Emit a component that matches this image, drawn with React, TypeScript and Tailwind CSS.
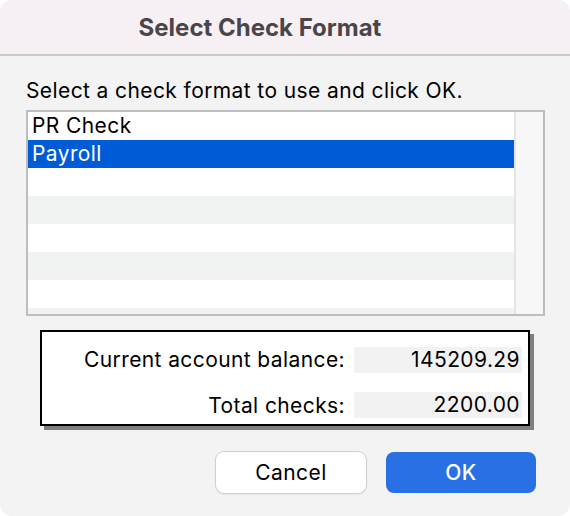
import { useState } from 'react';

const rows = ['PR Check', 'Payroll', '', '', '', '', '', ''];

export default function App() {
  const [selected, setSelected] = useState(1);

  return (
    <div className="w-[570px] h-[516px] bg-white" style={{ fontFamily: 'Inter, "Liberation Sans", sans-serif' }}>
      <div className="flex flex-col w-full h-full rounded-[12px] overflow-hidden bg-[#f3f3f3]">
        <div className="h-[56px] shrink-0 bg-[#f6f0f5] flex items-center justify-center pr-[50px] pt-[1px] border-b-2 border-[#c9c9c9]">
          <h1 className="text-[24px] font-bold text-[#4a4549] tracking-[0px]">Select Check Format</h1>
        </div>

        <div className="flex flex-col px-[26px] pt-[22px] text-[21px] tracking-[0.4px]">
          <p className="leading-[26px] text-black">Select a check format to use and click OK.</p>

          <div className="mt-[6px] w-[519px] h-[206px] border-2 border-[#bdbdbd] bg-white flex overflow-hidden">
            <div className="flex-1 flex flex-col">
              {rows.map((r, i) => (
                <div
                  key={i}
                  onClick={() => r && setSelected(i)}
                  className={
                    'h-[28px] shrink-0 pl-[4px] leading-[28px] ' +
                    (i === selected ? 'bg-[#005bd6] text-white' : i % 2 === 1 ? 'bg-[#f1f2f2] text-black' : 'bg-white text-black')
                  }
                >
                  {r}
                </div>
              ))}
            </div>
            <div className="w-[29px] bg-[#f7f7f7] border-l-2 border-[#e4e4e4]" />
          </div>

          <div className="mt-[14px] ml-[14px] w-[490px] h-[96px] border-2 border-black bg-white shadow-[4px_4px_0_#808080] flex flex-col pt-[12px] gap-[14px] text-black">
            <div className="flex items-center">
              <span className="w-[303px] text-right">Current account balance:</span>
              <span className="ml-[9px] w-[168px] h-[26px] bg-[#f2f2f2] text-right pr-[2px] leading-[26px]">145209.29</span>
            </div>
            <div className="flex items-center">
              <span className="w-[303px] text-right">Total checks:</span>
              <span className="ml-[9px] w-[168px] h-[26px] bg-[#f2f2f2] text-right pr-[2px] leading-[26px]">2200.00</span>
            </div>
          </div>

          <div className="mt-[26px] flex justify-end gap-[20px] pr-[8px]">
            <button className="w-[150px] h-[41px] rounded-[8px] bg-white text-black shadow-[0_0_0_1px_#d0d0d0,0_1px_2px_rgba(0,0,0,0.15)]">
              Cancel
            </button>
            <button className="w-[150px] h-[41px] rounded-[8px] bg-[#2870e3] text-white font-medium">
              OK
            </button>
          </div>
        </div>
      </div>
    </div>
  );
}
